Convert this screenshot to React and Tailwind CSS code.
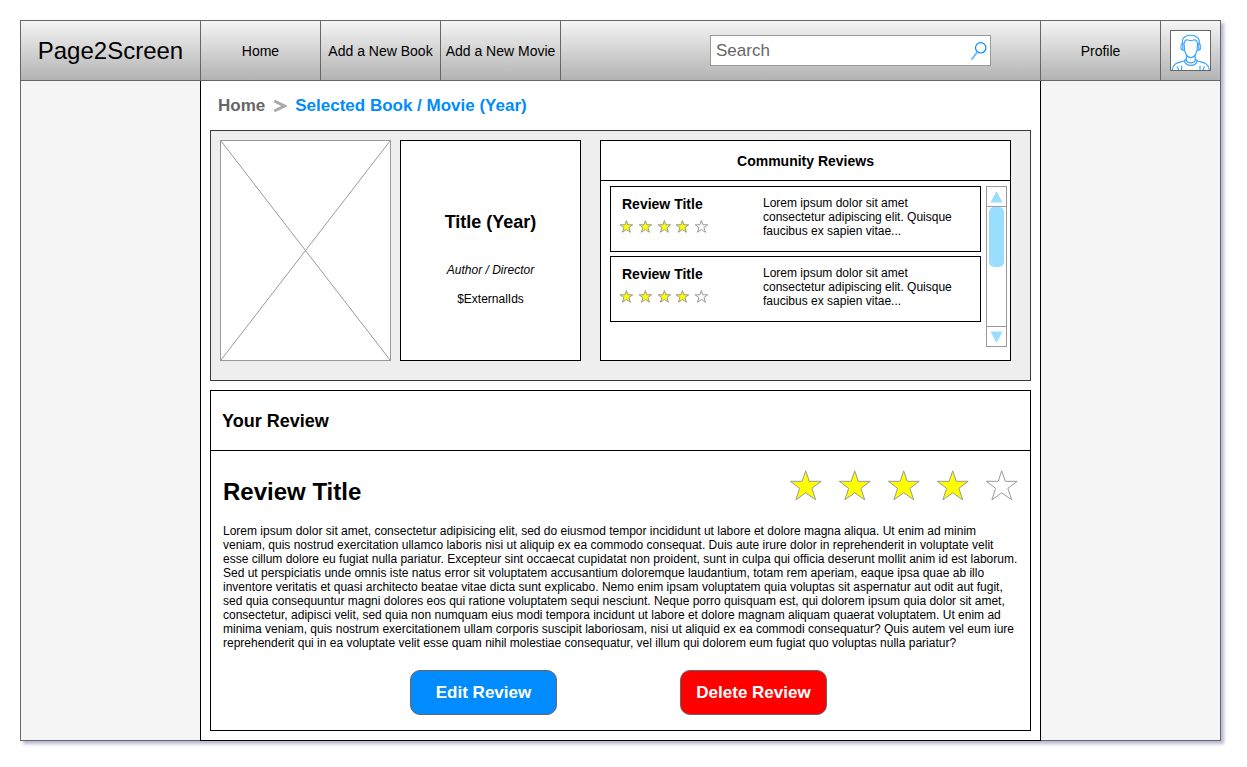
import React from "react";

const REVIEWS = [
  {
    id: 1,
    title: "Review Title",
    rating: 4,
    excerpt: "Lorem ipsum dolor sit amet consectetur adipiscing elit. Quisque faucibus ex sapien vitae...",
  },
  {
    id: 2,
    title: "Review Title",
    rating: 4,
    excerpt: "Lorem ipsum dolor sit amet consectetur adipiscing elit. Quisque faucibus ex sapien vitae...",
  },
];

const REVIEW_TEXT =
  "Lorem ipsum dolor sit amet, consectetur adipisicing elit, sed do eiusmod tempor incididunt ut labore et dolore magna aliqua. Ut enim ad minim veniam, quis nostrud exercitation ullamco laboris nisi ut aliquip ex ea commodo consequat. Duis aute irure dolor in reprehenderit in voluptate velit esse cillum dolore eu fugiat nulla pariatur. Excepteur sint occaecat cupidatat non proident, sunt in culpa qui officia deserunt mollit anim id est laborum. Sed ut perspiciatis unde omnis iste natus error sit voluptatem accusantium doloremque laudantium, totam rem aperiam, eaque ipsa quae ab illo inventore veritatis et quasi architecto beatae vitae dicta sunt explicabo. Nemo enim ipsam voluptatem quia voluptas sit aspernatur aut odit aut fugit, sed quia consequuntur magni dolores eos qui ratione voluptatem sequi nesciunt. Neque porro quisquam est, qui dolorem ipsum quia dolor sit amet, consectetur, adipisci velit, sed quia non numquam eius modi tempora incidunt ut labore et dolore magnam aliquam quaerat voluptatem. Ut enim ad minima veniam, quis nostrum exercitationem ullam corporis suscipit laboriosam, nisi ut aliquid ex ea commodi consequatur? Quis autem vel eum iure reprehenderit qui in ea voluptate velit esse quam nihil molestiae consequatur, vel illum qui dolorem eum fugiat quo voluptas nulla pariatur?";

function Stars({ value, className, starClassName }) {
  return (
    <div role="img" aria-label={`${value} out of 5 stars`} className={`flex justify-between ${className}`}>
      {[1, 2, 3, 4, 5].map((n) => (
        <svg key={n} viewBox="0 0 32 31" className={starClassName} aria-hidden="true">
          <path
            d="M15.7 0.8 L19.3 11.3 H31.2 L21.9 18.3 L25.7 29.8 L15.7 22.8 L5.9 29.8 L9.6 18.3 L0.3 11.3 H12.2 Z"
            fill={n <= value ? "#ffff00" : "#ffffff"}
            stroke="#999999"
            strokeWidth="1"
            vectorEffect="non-scaling-stroke"
          />
        </svg>
      ))}
    </div>
  );
}

function NavLink({ children }) {
  return (
    <a
      href="#"
      className="flex w-[120px] shrink-0 items-center justify-center border-r border-[#666666] text-sm whitespace-nowrap"
    >
      {children}
    </a>
  );
}

function Avatar() {
  return (
    <svg viewBox="0 0 39 39" className="size-[39px]" fill="none" stroke="#3ba6ff" strokeWidth="1.2" aria-hidden="true">
      <path d="M11.4 13 C10.8 7.6 12.6 6.8 14.4 5.6 C17 3.8 22.4 3.8 25 5.6 C27 6.8 28.8 7.6 28.2 13" />
      <path d="M13 14 C13 10.4 14.2 9 15.8 8.8 C18.4 9.8 21.2 9.8 23.8 8.8 C25.4 9 26.6 10.4 26.6 14" />
      <path d="M13.2 14 C13 21.6 15.6 26.6 19.8 26.6 C24 26.6 26.6 21.6 26.4 14" />
      <path d="M12.8 12.2 L10.8 13 C9.6 14.6 9.6 17.4 10.8 18.8 L13.4 19.8 M11.8 12.4 V19.2" />
      <path d="M26.8 12.2 L28.8 13 C30 14.6 30 17.4 28.8 18.8 L26.2 19.8 M27.8 12.4 V19.2" />
      <path d="M15.4 24.6 V29.8 C16.6 32.6 23 32.6 24.2 29.8 V24.6" />
      <path d="M15.4 28.4 L13.4 29.4 C14.2 36 25.4 36 26.2 29.4 L24.2 28.4" />
      <path d="M13.4 30 C7.5 31.6 2.6 31.4 1.2 39 M26.2 30 C32.1 31.6 37 31.4 38.4 39" />
      <path d="M6.2 35.4 L7.6 39 M10.6 34.8 V39 M33.4 35.4 L32 39 M29 34.8 V39" />
    </svg>
  );
}

function Header() {
  return (
    <header className="flex h-[60px] border-b border-[#666666] bg-linear-to-b from-[#f5f5f5] to-[#b3b3b3]">
      <a
        href="#"
        className="flex w-[180px] shrink-0 items-center justify-center border-r border-[#666666] text-2xl"
      >
        Page2Screen
      </a>
      <nav className="flex">
        <NavLink>Home</NavLink>
        <NavLink>Add a New Book</NavLink>
        <NavLink>Add a New Movie</NavLink>
      </nav>
      <div className="flex flex-1 items-center justify-end border-r border-[#666666] pr-[49px]">
        <form
          role="search"
          className="flex h-[31px] w-[281px] items-center border border-[#999999] bg-white pr-[3px] pl-[5px]"
        >
          <input
            type="search"
            aria-label="Search"
            placeholder="Search"
            className="min-w-0 flex-1 bg-transparent text-[17px] leading-5 outline-none placeholder:text-[#666666]"
          />
          <button type="button" aria-label="Search">
            <svg viewBox="0 0 17 20" className="h-5 w-[17px]" fill="none" stroke="#008cff" aria-hidden="true">
              <circle cx="10.7" cy="6.8" r="5.2" strokeWidth="1.2" />
              <path d="M7.4 10.9 L1.4 18.8" strokeWidth="1.8" stroke="#66baff" />
            </svg>
          </button>
        </form>
      </div>
      <NavLink>Profile</NavLink>
      <div className="flex w-[59px] shrink-0 items-center justify-center">
        <a href="#" aria-label="Your account" className="border border-[#666666] bg-white">
          <Avatar />
        </a>
      </div>
    </header>
  );
}

function ReviewCard({ review }) {
  return (
    <li className="flex h-[66px] border border-black bg-white">
      <div className="w-[152px] shrink-0 pt-[7px]">
        <h3 className="pl-[11px] text-sm leading-5 font-bold">{review.title}</h3>
        <Stars value={review.rating} className="mt-[6px] ml-[9px] w-[88px]" starClassName="h-[13px] w-[13px]" />
      </div>
      <p className="max-w-[205px] pt-[9px] text-xs leading-[14px]">{review.excerpt}</p>
    </li>
  );
}

function ScrollBar() {
  return (
    <div className="flex h-[161px] w-[21px] shrink-0 flex-col border border-[#999999] bg-white">
      <button type="button" aria-label="Scroll up" className="flex h-5 items-center justify-center border-b border-[#999999]">
        <svg viewBox="0 0 12 12" className="size-3" aria-hidden="true">
          <path d="M5.5 0 L11.5 11.5 H-0.5 Z" fill="#99ddff" />
        </svg>
      </button>
      <div className="flex flex-1 justify-center">
        <div className="h-[60px] w-[15px] rounded-[5px] bg-[#99ddff]" />
      </div>
      <button type="button" aria-label="Scroll down" className="flex h-5 items-center justify-center border-t border-[#999999]">
        <svg viewBox="0 0 12 12" className="size-3" aria-hidden="true">
          <path d="M5.5 12 L-0.5 0.5 H11.5 Z" fill="#99ddff" />
        </svg>
      </button>
    </div>
  );
}

function Summary() {
  return (
    <section className="flex border border-[#36393d] bg-[#eeeeee] pt-[9px] pr-[19px] pb-[19px] pl-[9px]">
      <div className="h-[221px] w-[171px] shrink-0 border border-[#999999] bg-white">
        <svg viewBox="0 0 169 219" className="size-full" preserveAspectRatio="none" aria-label="Cover placeholder">
          <path d="M0 0 L169 219 M169 0 L0 219" stroke="#999999" strokeWidth="1" fill="none" />
        </svg>
      </div>
      <div className="ml-[9px] flex w-[181px] shrink-0 flex-col items-center border border-black bg-white pt-[70px]">
        <h1 className="text-lg leading-[22px] font-bold">Title (Year)</h1>
        <p className="mt-[30px] text-xs leading-[14px] italic">Author / Director</p>
        <p className="mt-[15px] text-xs leading-[14px]">$ExternalIds</p>
      </div>
      <section className="ml-[19px] min-w-0 flex-1 border border-black bg-white">
        <h2 className="flex h-10 items-center justify-center border-b border-black text-sm font-bold">
          Community Reviews
        </h2>
        <div className="flex gap-[5px] pt-[5px] pr-[3px] pl-[9px]">
          <ul className="flex min-w-0 flex-1 flex-col gap-1">
            {REVIEWS.map((review) => (
              <ReviewCard key={review.id} review={review} />
            ))}
          </ul>
          <ScrollBar />
        </div>
      </section>
    </section>
  );
}

function YourReview() {
  return (
    <section className="mt-[9px] border border-black bg-white">
      <h2 className="flex h-[60px] items-center border-b border-black pl-[11px] text-lg font-bold">Your Review</h2>
      <article className="pt-[19px] pr-3 pb-[15px] pl-3">
        <div className="flex items-start justify-between">
          <h3 className="pt-2 text-2xl leading-7 font-bold">Review Title</h3>
          <Stars value={4} className="w-[228px]" starClassName="h-[31px] w-8" />
        </div>
        <p className="mt-[18px] text-xs leading-[14px]">{REVIEW_TEXT}</p>
        <div className="mt-5 flex justify-center gap-[123px] pr-1">
          <button
            type="button"
            className="h-[45px] w-[147px] rounded-[10px] border border-[#666666] bg-[#008cff] text-[17px] font-bold text-white"
          >
            Edit Review
          </button>
          <button
            type="button"
            className="h-[45px] w-[147px] rounded-[10px] border border-[#666666] bg-[#ff0000] text-[17px] font-bold text-white"
          >
            Delete Review
          </button>
        </div>
      </article>
    </section>
  );
}

export default function App() {
  return (
    <div className="min-h-screen bg-white pt-5 pr-[26px] pb-5 pl-5 font-['Liberation_Sans',Arial,sans-serif] text-black">
      <div className="border-x border-t border-[#666666] bg-[#f5f5f5] shadow-[3px_3px_3px_rgba(80,80,140,0.4)]">
        <Header />
        <div className="grid grid-cols-[179px_minmax(0,1fr)_179px]">
          <aside className="border-b border-[#666666]" />
          <main className="border-x border-b border-black bg-white px-[9px] pb-[9px]">
            <nav aria-label="Breadcrumb" className="flex h-[49px] items-center pl-2 text-[17px] font-bold">
              <a href="#" className="text-[#666666]">
                Home
              </a>
              <svg viewBox="0 0 14 14" className="mx-2 size-[14px]" fill="none" aria-hidden="true">
                <path d="M1.2 2 L11.4 7 L1.2 12" stroke="#aaaaaa" strokeWidth="3" />
              </svg>
              <a href="#" aria-current="page" className="text-[#008cff]">
                Selected Book / Movie (Year)
              </a>
            </nav>
            <Summary />
            <YourReview />
          </main>
          <aside className="border-b border-[#666666]" />
        </div>
      </div>
    </div>
  );
}
